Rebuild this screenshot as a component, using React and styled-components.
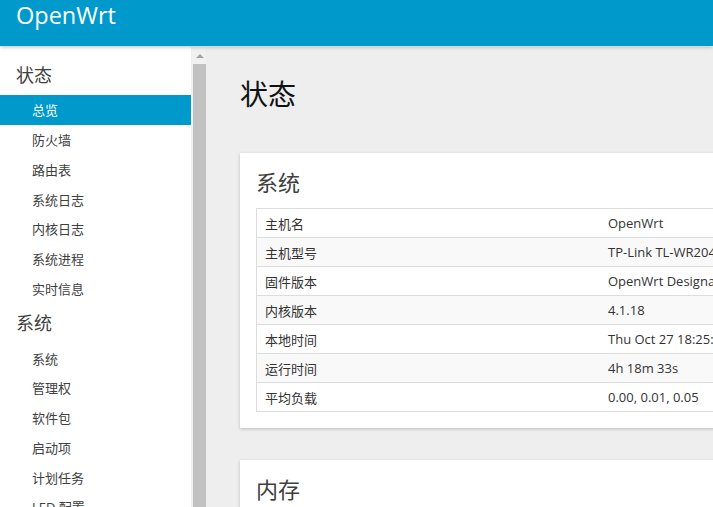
import styled, { createGlobalStyle } from "styled-components";

const blue = "#0099cc";
const text = "#404040";

const GlobalStyle = createGlobalStyle`
    html, body {
        margin: 0;
        padding: 0;
        overflow: hidden;
        font-family: "Open Sans", "Noto Sans CJK SC", sans-serif;
        color: ${text};
    }
`;

const Page = styled.div`
    display: flex;
    flex-direction: column;
    height: 100vh;
`;

const Header = styled.header`
    height: 46px;
    flex: 0 0 46px;
    background: ${blue};
    padding-left: 16px;
    box-shadow: 0 1px 4px rgba(0, 0, 0, 0.25);
    position: relative;
    z-index: 2;
`;

const Brand = styled.a`
    display: block;
    color: #fff;
    font-size: 23.5px;
    line-height: 30px;
    text-decoration: none;
`;

const Body = styled.div`
    flex: 1;
    display: flex;
    min-height: 0;
    margin-top: 1px;
`;

const Sidebar = styled.nav`
    width: 191px;
    flex: 0 0 191px;
    background: #fff;
    padding-top: 8px;
    overflow: hidden;
`;

const SectionTitle = styled.div`
    height: 40px;
    line-height: 40px;
    padding-left: 16px;
    font-size: 18px;
    color: ${text};
`;

const MenuItem = styled.a`
    display: flex;
    align-items: center;
    height: 29.75px;
    padding-left: 32px;
    font-size: 13px;
    color: ${props => (props.$active ? "#fff" : text)};
    background: ${props => (props.$active ? blue : "transparent")};
    text-decoration: none;
`;

const ScrollTrack = styled.div`
    width: 15px;
    flex: 0 0 15px;
    background: #f1f1f1;
    display: flex;
    flex-direction: column;
    align-items: flex-end;
`;

const ScrollArrow = styled.div`
    height: 17px;
    width: 100%;
    display: flex;
    align-items: center;
    justify-content: center;
    &::after {
        content: "";
        border-left: 4px solid transparent;
        border-right: 4px solid transparent;
        border-bottom: 4px solid #a3a3a3;
        margin-left: 2px;
    }
`;

const ScrollThumb = styled.div`
    flex: 1;
    width: 13px;
    background: #c1c1c1;
`;

const Main = styled.main`
    flex: 1;
    background: #eeeeee;
    padding: 30px 0 0 34px;
    overflow: hidden;
`;

const PageTitle = styled.h2`
    margin: 0 0 42px;
    font-size: 28px;
    font-weight: normal;
    line-height: 34px;
    color: #111;
`;

const Card = styled.section`
    width: 640px;
    background: #fff;
    padding: 16px;
    box-shadow: 0 1px 3px rgba(0, 0, 0, 0.22);
    & + & {
        margin-top: 32px;
    }
`;

const CardTitle = styled.h3`
    margin: 0 0 13px;
    font-size: 22px;
    font-weight: normal;
    line-height: 26px;
    color: ${text};
`;

const Table = styled.table`
    width: 100%;
    border-collapse: collapse;
    font-size: 13px;
    color: #333;
`;

const Row = styled.tr`
    background: ${props => (props.$odd ? "#f9f9f9" : "#fff")};
    border: 1px solid #ddd;
    border-right: none;
`;

const Cell = styled.td`
    height: 28px;
    padding: 0 8px;
    white-space: nowrap;
    &:first-child {
        width: 327px;
    }
`;

const statusMenu = ["总览", "防火墙", "路由表", "系统日志", "内核日志", "系统进程", "实时信息"];
const systemMenu = ["系统", "管理权", "软件包", "启动项", "计划任务", "LED 配置", "备份/升级"];

const sysInfo = [
    ["主机名", "OpenWrt"],
    ["主机型号", "TP-Link TL-WR2041N v2"],
    ["固件版本", "OpenWrt Designated Driver r49377"],
    ["内核版本", "4.1.18"],
    ["本地时间", "Thu Oct 27 18:25:12 2016"],
    ["运行时间", "4h 18m 33s"],
    ["平均负载", "0.00, 0.01, 0.05"],
];

const App = () => {
    return (
        <Page>
            <GlobalStyle />
            <Header>
                <Brand href="#">OpenWrt</Brand>
            </Header>
            <Body>
                <Sidebar>
                    <SectionTitle>状态</SectionTitle>
                    {statusMenu.map((item, i) => (
                        <MenuItem key={item} href="#" $active={i === 0}>{item}</MenuItem>
                    ))}
                    <SectionTitle>系统</SectionTitle>
                    {systemMenu.map(item => (
                        <MenuItem key={item} href="#">{item}</MenuItem>
                    ))}
                </Sidebar>
                <ScrollTrack>
                    <ScrollArrow />
                    <ScrollThumb />
                </ScrollTrack>
                <Main>
                    <PageTitle>状态</PageTitle>
                    <Card>
                        <CardTitle>系统</CardTitle>
                        <Table>
                            <tbody>
                                {sysInfo.map(([k, v], i) => (
                                    <Row key={k} $odd={i % 2 === 1}>
                                        <Cell>{k}</Cell>
                                        <Cell>{v}</Cell>
                                    </Row>
                                ))}
                            </tbody>
                        </Table>
                    </Card>
                    <Card>
                        <CardTitle>内存</CardTitle>
                    </Card>
                </Main>
            </Body>
        </Page>
    );
};

export default App;
